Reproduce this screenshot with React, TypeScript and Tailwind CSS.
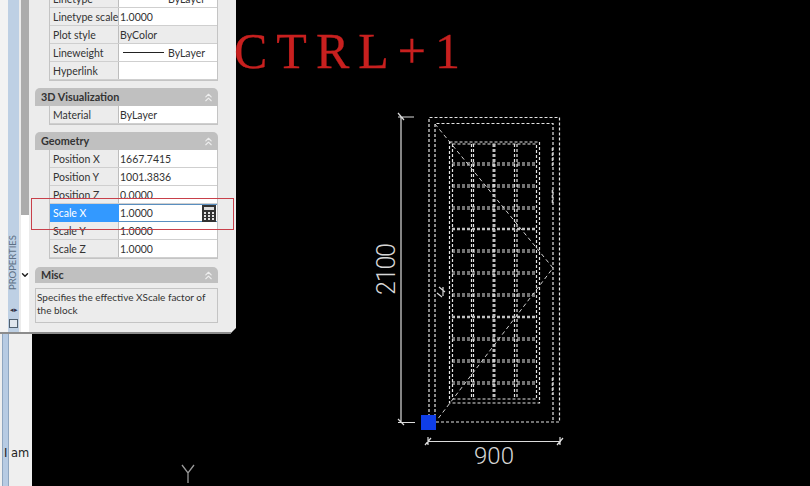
import { ChevronsUp, ChevronDown } from 'lucide-react';

const generalRows = [
  { label: 'Linetype', value: 'ByLayer', line: true, grey: false },
  { label: 'Linetype scale', value: '1.0000', line: false, grey: false },
  { label: 'Plot style', value: 'ByColor', line: false, grey: true },
  { label: 'Lineweight', value: 'ByLayer', line: true, grey: false },
  { label: 'Hyperlink', value: '', line: false, grey: false },
];

const geometryTop = [
  { label: 'Position X', value: '1667.7415' },
  { label: 'Position Y', value: '1001.3836' },
  { label: 'Position Z', value: '0.0000' },
];

const geometryBottom = [
  { label: 'Scale Y', value: '1.0000' },
  { label: 'Scale Z', value: '1.0000' },
];

function Row({ label, value, line, grey }: { label: string; value: string; line?: boolean; grey?: boolean }) {
  return (
    <div className="flex h-[18px] border-b border-[#cfcfcf] text-[10.5px] leading-[18px] whitespace-nowrap text-[#333]">
      <div className="w-[69px] shrink-0 border-r border-[#bdbdbd] pl-[3px]">{label}</div>
      <div className={`flex flex-1 items-center pl-[1px] ${grey ? 'bg-[#ececec]' : 'bg-white'}`}>
        {line && <span className="mr-[4px] ml-[3px] h-px w-[41px] bg-[#222]" />}
        {value}
      </div>
    </div>
  );
}

function SectionHeader({ title, short }: { title: string; short?: boolean }) {
  return (
    <div
      className={`flex items-center justify-between rounded-t-[5px] bg-[#c0c0c0] pr-[3px] pl-[6px] text-[10.8px] font-bold text-[#333] ${
        short ? 'h-[16px]' : 'h-[18px]'
      }`}
    >
      {title}
      <ChevronsUp className="h-[13px] w-[13px] text-[#eeeeee]" strokeWidth={2} />
    </div>
  );
}

function Calculator() {
  return (
    <svg width="14" height="17" viewBox="0 0 14 17">
      <rect width="14" height="17" fill="#333333" />
      <rect x="2" y="2" width="10" height="3" fill="#dddddd" />
      {[7, 10, 13].map((y) =>
        [2, 6, 10].map((x) => <rect key={`${x}-${y}`} x={x} y={y} width="2" height="2" fill="#e4e4e4" />),
      )}
    </svg>
  );
}

const mullions = [
  { x: 471.5, width: 1.2, color: '#e4e4e4' },
  { x: 473.5, width: 1.2, color: '#e4e4e4' },
  { x: 494, width: 3, color: '#c0c0c0' },
  { x: 514.5, width: 1.2, color: '#e4e4e4' },
  { x: 517, width: 1.2, color: '#e4e4e4' },
];
const rails = [164, 186, 208, 229, 251, 273, 295, 317, 339, 361, 383];

function Drawing() {
  return (
    <svg width="810" height="486" viewBox="0 0 810 486" className="absolute top-0 left-0">
      <g fill="none" stroke="#e4e4e4" strokeWidth="1.2" strokeDasharray="3 2">
        <path d="M429 422 V117.5 H559.5 V422 Z" />
        <path d="M435 422 V123.5 H553 V422" />
        <rect x="449.5" y="142" width="90" height="261" />
        <rect x="452.5" y="144" width="84" height="255" />
        {mullions.map((m) => (
          <line key={m.x} x1={m.x} y1="144" x2={m.x} y2="399" stroke={m.color} strokeWidth={m.width} />
        ))}
        {rails.map((y) =>
          y === 229 || y === 317 ? (
            <line key={y} x1="452" y1={y} x2="536" y2={y} stroke="#c0c0c0" strokeWidth="2.6" />
          ) : (
            <g key={y}>
              <line x1="452" y1={y - 1} x2="536" y2={y - 1} />
              <line x1="452" y1={y + 1} x2="536" y2={y + 1} />
            </g>
          ),
        )}
      </g>
      <g fill="none" stroke="#d0d0d0" strokeWidth="1" strokeDasharray="4 3">
        <path d="M435 124 L553 268 L437 420" />
        <path d="M552.5 148 V167 M552.5 190 V205 M552.5 378 V395" strokeDasharray="3 2" strokeWidth="1.6" />
      </g>
      <path d="M439 287 l6 5 M437 293 l5 4 M443 287 v9" stroke="#d8d8d8" strokeWidth="1.2" fill="none" />
      <g stroke="#dcdcdc" strokeWidth="1.2" fill="none">
        <path d="M401 117 V423 M398 117 H414 M398 422.5 H415 M398 113 l6 7 M398 419 l6 6" />
        <path d="M428 441.5 H561 M425 445 l6 -7 M557 445 l6 -7 M428 437 v8 M560 437 v8" />
      </g>
      <rect x="421" y="415" width="15" height="15" fill="#0f3ee8" />
      <text
        transform="translate(395 295) rotate(-90)"
        fill="#d6d6d6"
        fontSize="25"
        fontFamily="Roboto, sans-serif"
        fontWeight="300"
        textLength="52"
      >
        2100
      </text>
      <text x="474" y="464" fill="#d6d6d6" fontSize="24" fontFamily="Roboto, sans-serif" fontWeight="300" textLength="40">
        900
      </text>
      <path d="M182 465 L188 473 L194 465 M188 473 V483" stroke="#9a9a9a" strokeWidth="1.3" fill="none" />
    </svg>
  );
}

export default function App() {
  return (
    <div className="relative h-[486px] w-[810px] overflow-hidden bg-black font-['Lato','Liberation_Sans',sans-serif]">
      <Drawing />

      <div className="absolute top-0 left-0 flex h-[486px] w-[32px] bg-[#efefef] pl-[2px]">
        <div className="h-full w-[7px] border-x border-[#8fa6c0] bg-[#b7cbe3]" />
        <div className="relative flex-1">
          <span className="absolute top-[445px] -left-[5px] font-['DejaVu_Sans',sans-serif] text-[11.5px] leading-[16px] whitespace-nowrap text-[#222]">
            I am
          </span>
        </div>
      </div>

      <div className="absolute top-0 left-0 flex h-[334px] w-[236px] border-b-2 border-[#8c8c8c] bg-[#ececec] [clip-path:polygon(0_0,100%_0,100%_calc(100%-6px),calc(100%-6px)_100%,0_100%)]">
        <div className="w-[8px] bg-[#f3f3f3]" />
        <div className="flex w-[11px] flex-col items-center justify-end bg-[#bed0e4] pb-[4px] text-[#5d7085]">
          <span className="mb-[16px] rotate-180 text-[9.5px] whitespace-nowrap [writing-mode:vertical-rl]">
            PROPERTIES
          </span>
          <span className="mb-[6px] text-[7px] leading-none text-[#334]">◂▸</span>
          <span className="h-[9px] w-[9px] border border-[#50606f] bg-[#dfe6ee]" />
        </div>
        <div className="ml-[2px] flex w-[8px] flex-col items-center bg-white">
          <div className="h-[215px] w-full shrink-0 bg-[#acacac]" />
          <ChevronDown className="mt-[55px] h-[10px] w-[10px] shrink-0 text-[#222]" strokeWidth={3.5} />
        </div>
        <div className="ml-[6px] flex w-[183px] flex-col">
          <div className="-mt-[10px] ml-[14px] border-x border-b border-[#c4c4c4]">
            {generalRows.map((r) => (
              <Row key={r.label} {...r} />
            ))}
          </div>
          <div className="mt-[7px]">
            <SectionHeader title="3D Visualization" />
            <div className="ml-[14px] border-x border-b border-[#c4c4c4]">
              <Row label="Material" value="ByLayer" />
            </div>
          </div>
          <div className="mt-[7px]">
            <SectionHeader title="Geometry" />
            <div className="ml-[14px] border-x border-b border-[#c4c4c4]">
              {geometryTop.map((r) => (
                <Row key={r.label} {...r} />
              ))}
              <div className="flex h-[18px] text-[10.5px] leading-[18px]">
                <div className="w-[69px] shrink-0 bg-[#3399ff] pl-[3px] text-white">Scale X</div>
                <div className="flex flex-1 items-center justify-between border-y border-[#5a8fc0] bg-white pl-[1px] text-[#333]">
                  1.0000
                  <span className="mr-[1px] flex h-full items-center">
                    <Calculator />
                  </span>
                </div>
              </div>
              {geometryBottom.map((r) => (
                <Row key={r.label} {...r} />
              ))}
            </div>
          </div>
          <div className="mt-[8px]">
            <SectionHeader title="Misc" short />
            <div className="mt-[5px] h-[35px] border border-[#c4c4c4] pt-[2px] pr-[6px] pl-[1px] text-[10px] leading-[13px] text-[#333]">
              Specifies the effective XScale factor of the block
            </div>
          </div>
        </div>
      </div>

      <div className="absolute top-[198px] left-[31px] h-[32px] w-[203px] border border-[#c8404a]" />

      <div className="absolute top-[23px] left-[234px] font-['Liberation_Serif',serif] text-[50px] leading-[56px] tracking-[9px] whitespace-nowrap text-[#c8201f] [-webkit-text-stroke:0.3px_#c8201f]">
        CTRL+1
      </div>
    </div>
  );
}
